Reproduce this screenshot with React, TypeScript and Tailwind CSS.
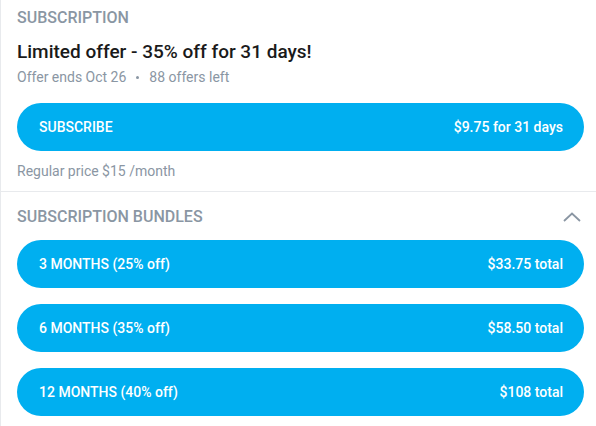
import React from 'react';

/** --- DATA --- **/
const bundles = [
  { label: '3 MONTHS (25% off)', price: '$33.75 total' },
  { label: '6 MONTHS (35% off)', price: '$58.50 total' },
  { label: '12 MONTHS (40% off)', price: '$108 total' },
];

/** --- SUB-COMPONENT: PILL BUTTON --- **/
const PillButton = ({ left, right }: { left: string; right: string }) => (
  <button className="w-full h-12 rounded-full bg-[#00aff0] text-white flex items-center justify-between pl-[22px] pr-[21px] text-[14px] font-medium">
    <span>{left}</span>
    <span>{right}</span>
  </button>
);

const App: React.FC = () => {
  return (
    <div className="min-h-screen bg-white border-l border-[#e8eaed] font-['Roboto',sans-serif] w-[596px] h-[426px] overflow-hidden">
      {/* Subscription */}
      <section className="pl-4 pr-[12px] pt-2 pb-[10px]">
        <h3 className="text-[16px] font-medium uppercase text-[#8a96a3] leading-5">Subscription</h3>
        <p className="mt-[12px] text-[19px] font-medium text-[#1a1a1a] leading-6">Limited offer - 35% off for 31 days!</p>
        <p className="mt-[3px] text-[14px] text-[#8a96a3] leading-5 flex items-center">
          Offer ends Oct 26
          <span className="mx-[10px] w-[3px] h-[3px] rounded-full bg-[#8a96a3]" />
          88 offers left
        </p>
        <div className="mt-[16px]">
          <PillButton left="SUBSCRIBE" right="$9.75 for 31 days" />
        </div>
        <p className="mt-[10px] text-[14px] text-[#8a96a3] leading-5">Regular price $15 /month</p>
      </section>

      {/* Bundles */}
      <section className="border-t border-[#e8eaed] pl-4 pr-[12px] pt-[15px]">
        <div className="flex items-center justify-between">
          <h3 className="text-[16px] font-medium uppercase text-[#8a96a3] leading-5">Subscription bundles</h3>
          <svg width="18" height="10" viewBox="0 0 18 10" className="mr-[3px]" fill="none">
            <path d="M1 9 L9 1.5 L17 9" stroke="#8a96a3" strokeWidth="1.8" />
          </svg>
        </div>
        <div className="mt-[13px] flex flex-col gap-4">
          {bundles.map((b) => (
            <PillButton key={b.label} left={b.label} right={b.price} />
          ))}
        </div>
      </section>
    </div>
  );
};

export default App;
